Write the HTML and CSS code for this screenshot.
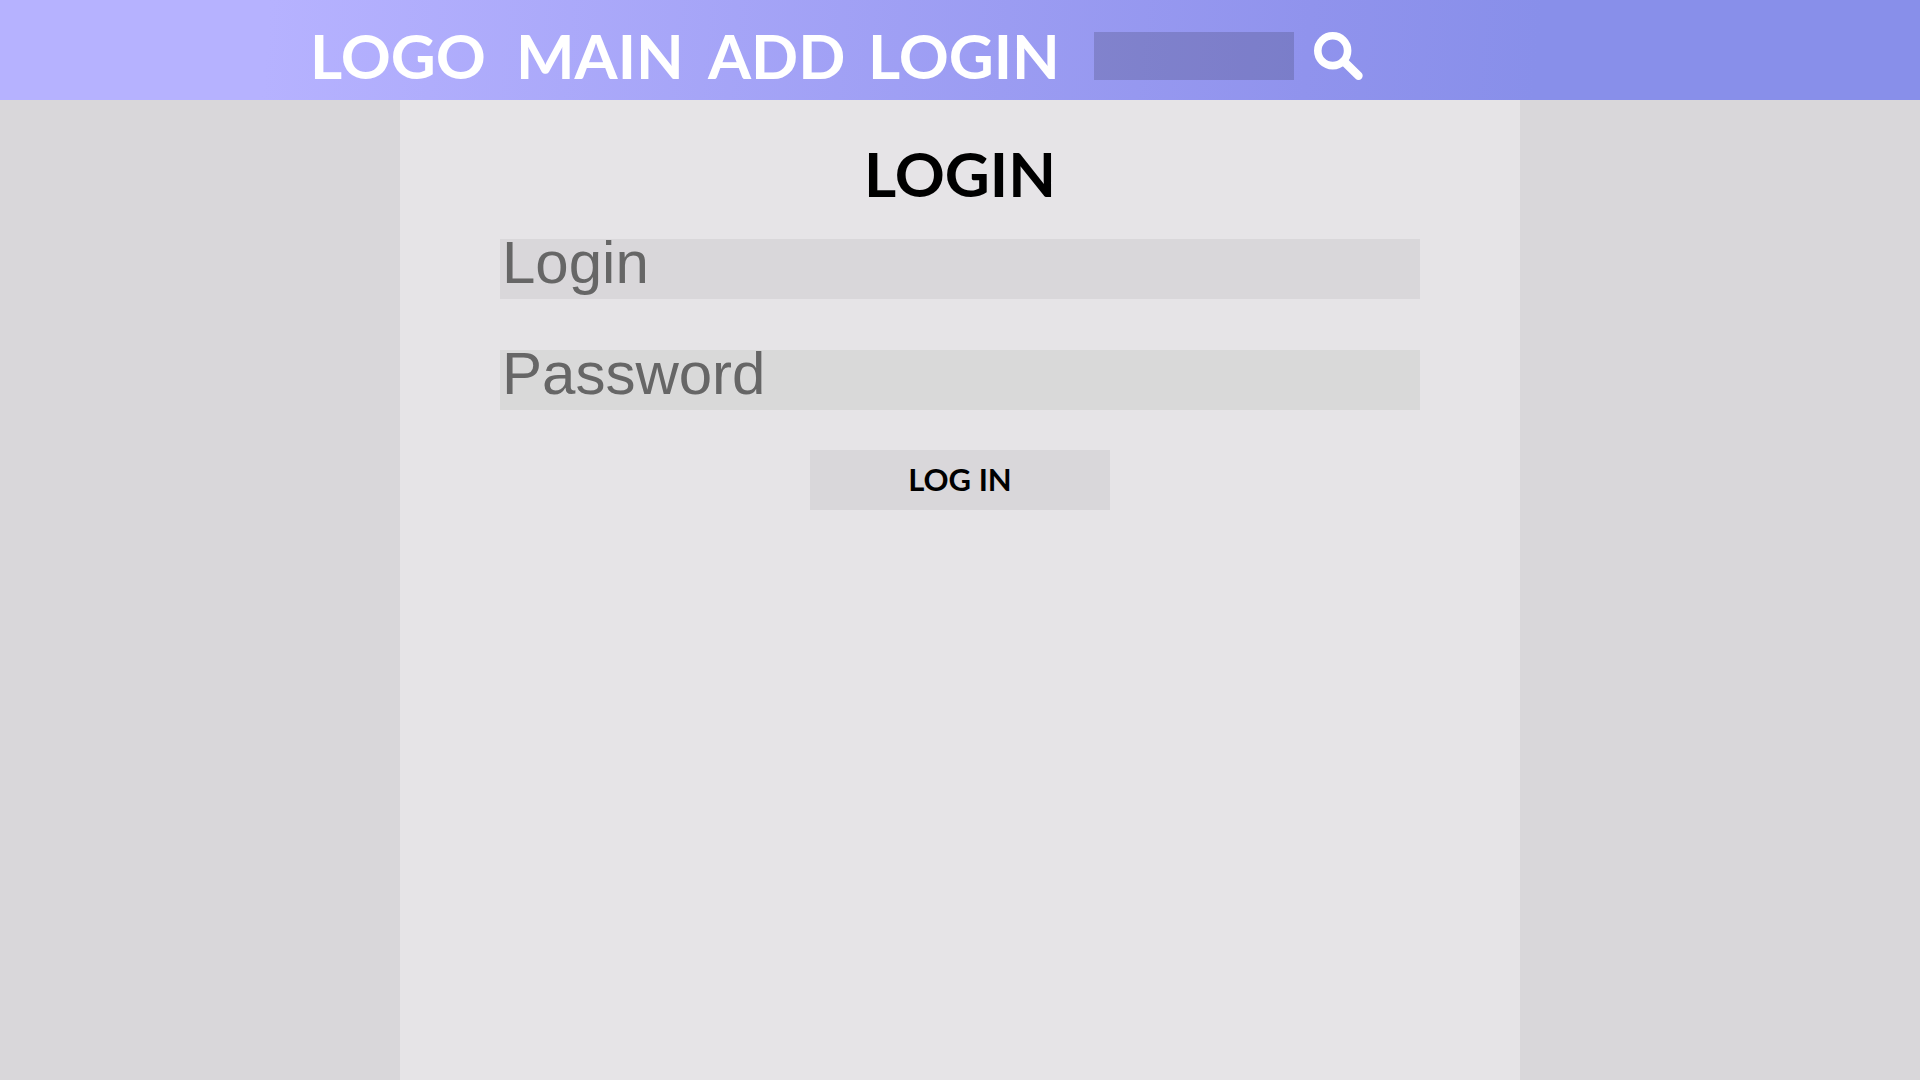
FILE: index.html
```html
<!DOCTYPE html>
<html lang="en">
<head>
  <meta charset="utf-8">
  <meta name="viewport" content="width=device-width, initial-scale=1">
  <title>Login</title>
  <link rel="stylesheet" href="styles.css">
</head>
<body>
  <header class="header">
    <nav class="nav">
      <a class="nav-link" href="#">LOGO</a>
      <a class="nav-link" href="#">MAIN</a>
      <a class="nav-link" href="#">ADD</a>
      <a class="nav-link" href="#">LOGIN</a>
    </nav>
    <form class="search">
      <input class="search-input" type="search" aria-label="Search">
      <button class="search-button" type="submit" aria-label="Submit search">
        <svg class="search-icon" viewBox="0 0 49 48" fill="none" stroke="currentColor" aria-hidden="true">
          <circle cx="18.7" cy="18.7" r="14.9" stroke-width="7.6"/>
          <path d="M30 29.5 44.5 43.7" stroke-width="8.4" stroke-linecap="round"/>
        </svg>
      </button>
    </form>
  </header>
  <main class="main">
    <h1 class="title">LOGIN</h1>
    <form class="form">
      <input class="field" type="text" placeholder="Login" aria-label="Login">
      <input class="field field-password" type="password" placeholder="Password" aria-label="Password">
      <button class="submit" type="submit">LOG IN</button>
    </form>
  </main>
</body>
</html>
```
FILE: styles.css
```css
* {
  box-sizing: border-box;
}

body {
  display: flex;
  flex-direction: column;
  min-height: 100vh;
  margin: 0;
  background: #d9d7da;
  font-family: Lato, "Open Sans", sans-serif;
  font-weight: 700;
}

.header {
  display: flex;
  align-items: center;
  min-height: 100px;
  padding: 12px 20px 0 310px;
  background: linear-gradient(95deg, #b6b2ff 14%, #9093ed 68%, #888fea 80%);
  color: #fff;
}

.nav {
  display: grid;
  grid-template-columns: 206px 192px 160px 226px;
}

.nav-link {
  padding-bottom: 2px;
  color: inherit;
  font-size: 62px;
  line-height: 70px;
  text-decoration: none;
}

.search {
  display: flex;
  gap: 20px;
}

.search-input {
  width: 200px;
  height: 48px;
  padding: 0 8px;
  border: 0;
  border-radius: 0;
  background: rgba(0, 0, 0, 0.15);
  color: inherit;
  font-size: 24px;
}

.search-button {
  padding: 0;
  border: 0;
  background: none;
  color: inherit;
  cursor: pointer;
}

.search-icon {
  display: block;
  width: 49px;
  height: 48px;
}

.main {
  flex: 1;
  width: 100%;
  max-width: 1120px;
  margin: 0 auto;
  padding: 38px 100px;
  background: #e6e4e7;
}

.title {
  margin: 0 0 31px;
  color: #000;
  font-size: 62px;
  font-weight: 700;
  line-height: 70px;
  text-align: center;
}

.form {
  display: flex;
  flex-direction: column;
}

.field {
  height: 60px;
  margin-bottom: 51px;
  padding: 0 2px 14px;
  border: 0;
  background: #d9d7da;
  color: #000;
  font-family: "Liberation Sans", Arial, sans-serif;
  font-size: 60px;
  line-height: 46px;
}

.field::placeholder {
  color: #666;
  opacity: 1;
}

.field-password {
  margin-bottom: 40px;
  background: #d9d9d9;
}

.submit {
  align-self: center;
  width: 300px;
  height: 60px;
  padding: 0 0 2px;
  border: 0;
  background: #d9d7da;
  color: #000;
  font-family: inherit;
  font-size: 31px;
  font-weight: 700;
  cursor: pointer;
}
```
